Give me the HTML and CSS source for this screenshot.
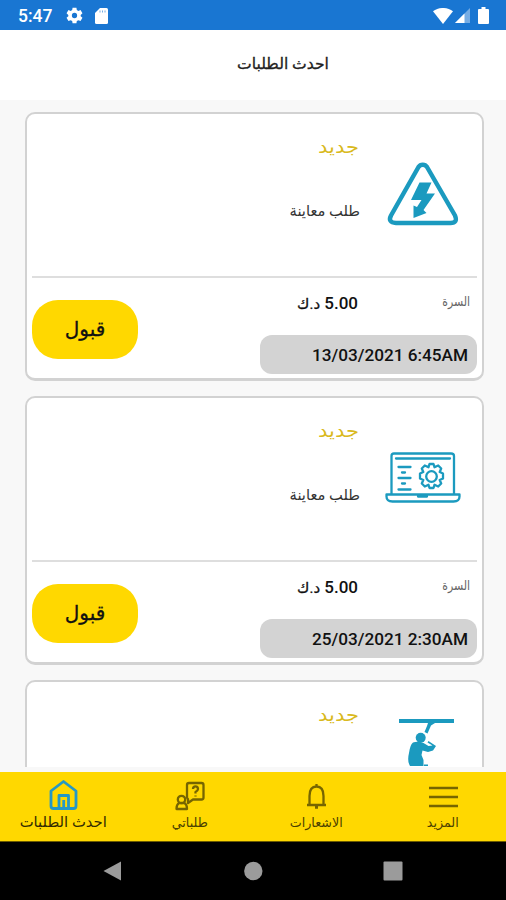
FILE: index.html
```html
<!DOCTYPE html>
<html lang="ar">
<head>
<meta charset="utf-8">
<title>احدث الطلبات</title>
<link rel="stylesheet" href="styles.css">
</head>
<body>
<div class="status">
  <span class="clock">5:47</span>
  <svg class="gear" viewBox="1 2 22 20"><path fill-rule="evenodd" d="M9.500 2h5l.5 3 2 1.100 2.800-1.100 2.500 4.200-2.300 2v1.800l2.300 1.900-2.500 4.200-2.800-1.100-2 1.100-.5 3h-5L9 19.100 7 18l-2.800 1.100-2.500-4.200L4 13v-1.800l-2.300-2L4.200 5 7 6.100 9 5zM12 8.600a3.400 3.400 0 1 0 0 6.800 3.400 3.400 0 0 0 0-6.800z"/></svg>
  <svg class="sd" viewBox="0 0 13 16"><path d="M5 0h6.500A1.500 1.500 0 0 1 13 1.500v13a1.500 1.500 0 0 1-1.500 1.500h-10A1.500 1.500 0 0 1 0 14.500V5z"/><path class="slots" d="M5 2.500v2M7.500 2.500v2M10 2.500v2"/></svg>
  <span class="grow"></span>
  <svg class="wifi" viewBox="0 0 20 16"><path d="M0 3.200C5.500-1.100 14.500-1.100 20 3.200L10 16z"/></svg>
  <svg class="signal" viewBox="0 0 15 15"><path opacity=".4" d="M15 0v15H0z"/><path d="M9.500 5.500V15H0z"/></svg>
  <svg class="battery" viewBox="0 0 11 17"><path d="M3.500 0h4v2H10a1 1 0 0 1 1 1v13a1 1 0 0 1-1 1H1a1 1 0 0 1-1-1V3a1 1 0 0 1 1-1h2.500z"/></svg>
</div>
<header class="header"><h1>احدث الطلبات</h1></header>
<main class="orders">
  <article class="card">
    <div class="summary">
      <div class="about"><p class="state">جديد</p><p class="kind">طلب معاينة</p></div>
      <svg class="pic" viewBox="0 0 76 76"><path class="line heavy" d="M33.500 9a5 5 0 0 1 8.500 0L70 57.500q3 7.500-4.500 7.500H11q-8.500-.5-5-7.500z"/><path class="solid" d="M34.500 24.500H46.500L41.500 35.500h8.500L38.500 52l3 3L28.500 60V47.500l3.500 1.500L36.500 42H26z"/></svg>
    </div>
    <div class="details">
      <button class="accept">قبول</button>
      <div class="facts">
        <div class="row"><span class="price" dir="rtl"><b>5.00</b> <span class="unit">د.ك</span></span><span class="area">السرة</span></div>
        <time class="date">13/03/2021 6:45AM</time>
      </div>
    </div>
  </article>
  <article class="card">
    <div class="summary">
      <div class="about"><p class="state">جديد</p><p class="kind">طلب معاينة</p></div>
      <svg class="pic" viewBox="0 0 76 76"><path class="line" d="M6.500 52V14q0-2.500 2.500-2.500h57q3 0 3 2.500v38M11 16.500h54M1.500 52.500h73v2q0 5-6 5H7.500q-6 0-6-5zM33 54.500h9"/><path class="line" d="M13.500 25h12M17 30.500h3M13.500 36h12M17 41.500h3M13.500 47.500h12"/><circle class="line" cx="46.500" cy="34.500" r="5.300"/><path class="line" d="M44.500 22h4l1 3.200 3.700-1.700 3 3-1.500 3.500 3.300 1.500v5l-3.300 1.500 1.500 3.500-3 3-3.700-1.700-1 3.200h-4l-1-3.200-3.700 1.700-3-3 1.500-3.500-3.300-1.500v-5l3.300-1.500-1.500-3.500 3-3 3.700 1.700z"/></svg>
    </div>
    <div class="details">
      <button class="accept">قبول</button>
      <div class="facts">
        <div class="row"><span class="price" dir="rtl"><b>5.00</b> <span class="unit">د.ك</span></span><span class="area">السرة</span></div>
        <time class="date">25/03/2021 2:30AM</time>
      </div>
    </div>
  </article>
  <article class="card">
    <div class="summary">
      <div class="about"><p class="state">جديد</p></div>
      <svg class="pic high" viewBox="0 0 76 76"><path class="solid" d="M14 11h55v4H50l-4 2.500-3.500 8-3-1.500 2.500-6 1-3H14z"/><circle class="solid" cx="35.700" cy="29.700" r="5"/><path class="solid" d="M28 34.500q5-1.500 10.500.5l5 3 4-.5-5-3 1-1.500 7.500 5-3 4.500-5 1.500-5.500-1.500L36.500 47l2 5v6H25q-3-5-1-13 1-8 4-10.500zM39 56.500h4V58h-4z"/></svg>
    </div>
    <div class="details"></div>
  </article>
</main>
<nav class="tabs">
  <a class="tab current"><svg viewBox="0 0 32 32"><path d="M4 12 16.500 2.500 29 12v15q0 2.500-2.500 2.500h-20Q4 29.500 4 27zM12 29V16.500h9.500V29M16.700 29v-8"/></svg><span>احدث الطلبات</span></a>
  <a class="tab"><svg viewBox="0 0 32 32"><path d="M15 4h12.500q2 0 2 2v12.500q0 2-2 2H19L14 24v-4q-1-.5-1-2V6q0-2 2-2zM19 10q0-2.700 2.500-2.700T24 10q0 1.500-2.500 3v1.500M21.500 16.500v1"/><circle cx="7.500" cy="20.500" r="3.700"/><path d="M5 24q-2.500 1.500-2.500 6h10.500q0-4.500-2.500-6z"/></svg><span>طلباتي</span></a>
  <a class="tab"><svg viewBox="0 0 32 32"><path d="M7 26h19M9.500 26v-9q0-9.500 7-9.500t7 9.500v9M16.500 5v3M15 28.500h3"/></svg><span>الاشعارات</span></a>
  <a class="tab"><svg viewBox="0 0 32 32"><path d="M2 9h29M2 18h29M2 27h29"/></svg><span>المزيد</span></a>
</nav>
<footer class="system">
  <svg viewBox="0 0 20 20"><path d="M.5 10 18 .500v19z"/></svg>
  <svg viewBox="0 0 20 20"><circle cx="10.300" cy="10" r="9.200"/></svg>
  <svg viewBox="0 0 20 20"><rect x=".5" y=".5" width="19" height="19" rx="1"/></svg>
</footer>
</body>
</html>
```
FILE: styles.css
```css
* { box-sizing: border-box; }
body { margin: 0; width: 506px; height: 900px; overflow: hidden; display: flex; flex-direction: column; background: #f8f8f8; color: #111; font-family: Roboto, "DejaVu Sans", sans-serif; }
p, h1 { margin: 0; font-weight: normal; }
.status { height: 30px; flex: none; display: flex; align-items: center; padding: 1px 17px 0 18px; background: #1976d2; color: #fff; fill: #fff; }
.clock { font-size: 17.500px; font-weight: 500; width: 48px; }
.gear { width: 17px; height: 17px; }
.sd { width: 13px; height: 16px; margin-left: 12px; }
.slots { stroke: #1976d2; stroke-width: 1; opacity: .6; }
.grow { flex: 1; }
.wifi { width: 20px; height: 16px; }
.signal { width: 15px; height: 15px; margin: 0 8px 0 2px; }
.battery { width: 11px; height: 17px; }
.header { height: 70px; flex: none; background: #fff; display: flex; justify-content: center; padding: 21px 0 0 60px; }
.header h1 { font-size: 15.600px; line-height: 26px; color: #222; -webkit-text-stroke: .3px; }
.orders { height: 667px; flex: none; overflow: hidden; padding: 12px 22px 0 25px; display: flex; flex-direction: column; gap: 15px; }
.card { height: 269px; flex: none; padding: 0 5px; background: #fff; border: 2px solid #d2d2d2; border-bottom-width: 3px; border-radius: 10px; }
.summary { height: 164px; border-bottom: 2px solid #dedede; display: flex; justify-content: flex-end; }
.about { display: flex; flex-direction: column; align-items: flex-end; margin-right: 25px; padding-top: 21px; }
.state { font-size: 18px; line-height: 24px; color: #d9b91d; margin-right: 1px; transform: scaleX(1.17); transform-origin: right; }
.kind { font-size: 14.700px; line-height: 24px; margin-top: 40px; color: #333; }
.pic { width: 76px; height: 76px; margin: 44px 16px 0 0; }
.pic.high { margin-top: 26px; }
.line { fill: none; stroke: #1b9abf; stroke-width: 2.300; stroke-linecap: round; stroke-linejoin: round; }
.heavy { stroke-width: 4.500; }
.solid { fill: #1b9abf; }
.details { display: flex; justify-content: space-between; }
.accept { width: 106px; height: 59px; margin-top: 22px; padding: 0 0 2px; border: 0; border-radius: 26px; background: #ffd800; color: #111; font: 20px "DejaVu Sans", sans-serif; -webkit-text-stroke: .3px; }
.facts { width: 217px; padding-top: 12px; }
.row { display: flex; height: 26px; line-height: 26px; padding-right: 7px; justify-content: space-between; }
.price { width: 98px; font-size: 17px; white-space: nowrap; }
.price b { font-weight: 500; }
.unit { font-size: 15px; -webkit-text-stroke: .3px; }
.area { font-size: 13px; line-height: 24px; color: #666; transform: scaleX(.84); transform-origin: right; }
.date { display: block; height: 39px; margin-top: 19px; padding-right: 9px; text-align: right; font-size: 17.200px; line-height: 41px; font-weight: 500; background: #d3d3d3; border-radius: 12px; }
.tabs { height: 70px; flex: none; margin-top: 5px; display: grid; grid-template-columns: repeat(4, 126.500px); background: #ffd800; border-bottom: 1px solid #6b5b00; }
.tab { display: flex; flex-direction: column; align-items: center; padding-top: 7px; font-size: 12.700px; line-height: 24px; color: #4a4000; }
.tab svg { width: 32px; height: 32px; fill: none; stroke: #766500; stroke-width: 2.300; stroke-linejoin: round; }
.tab.current { font-size: 14.800px; line-height: 22px; color: #322b00; }
.current svg { stroke: #2598c5; stroke-width: 2.800; }
.system { flex: 1; background: #000; fill: #9b9b9b; display: flex; justify-content: center; gap: 120px; padding-top: 19px; }
.system svg { width: 20px; height: 20px; }
```
